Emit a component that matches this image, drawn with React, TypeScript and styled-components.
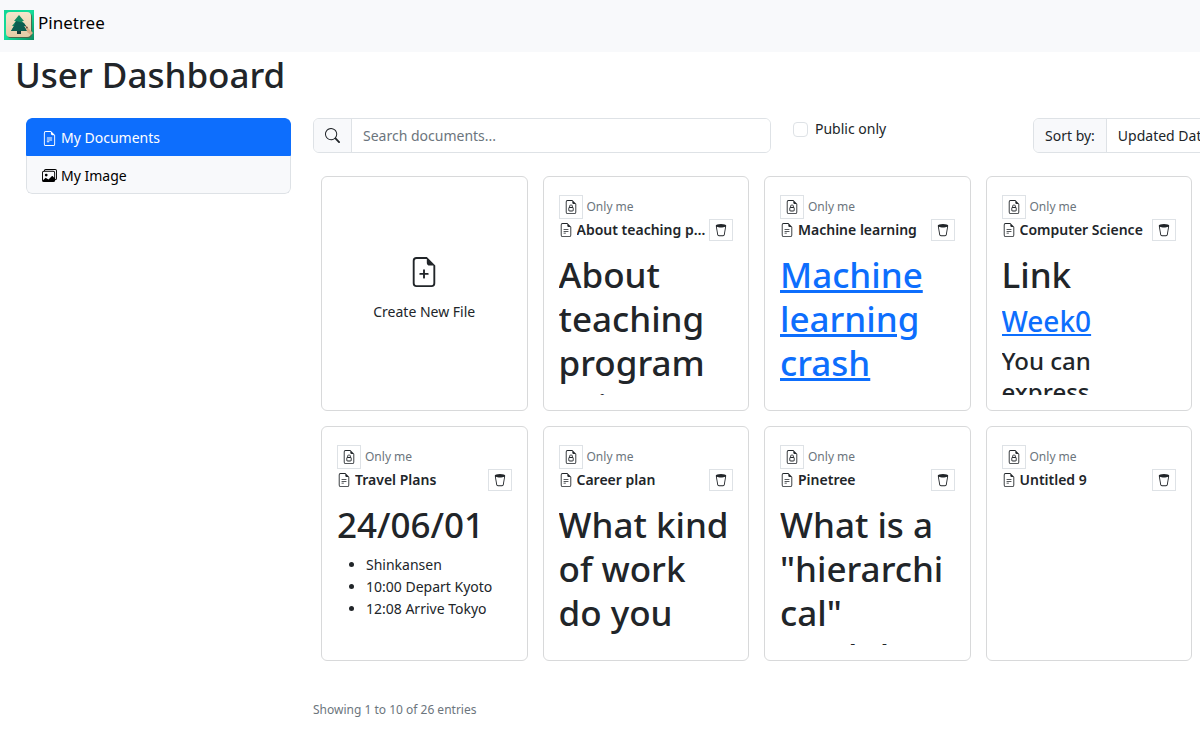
import React from "react";
import styled, { createGlobalStyle } from "styled-components";
import {
  BsFileEarmarkLock,
  BsFileEarmarkPlus,
  BsFileEarmarkText,
  BsImages,
  BsSearch,
  BsTrash2,
} from "react-icons/bs";

const GlobalStyle = createGlobalStyle`
  *, *::before, *::after { box-sizing: border-box; }
  body {
    margin: 0;
    background: #fff;
    color: #212529;
    font-family: "Noto Sans", "Open Sans", sans-serif;
    font-size: 14px;
    line-height: 22px;
  }
  button, input, select { font: inherit; color: inherit; }
  h1, h2, h3, p, ul { margin: 0; }
`;

const Page = styled.div`
  min-height: 100vh;
  overflow-x: hidden;
`;

const Navbar = styled.nav`
  display: flex;
  align-items: flex-start;
  padding: 10px 4px 12px;
  background: #f8f9fb;
`;

const Brand = styled.a`
  display: flex;
  gap: 4px;
  color: #000;
  font-size: 17px;
  line-height: 26px;
  text-decoration: none;
`;

const PageTitle = styled.h1`
  padding: 1px 15px 0;
  font-size: 35px;
  font-weight: 500;
  line-height: 44px;
`;

const Columns = styled.div`
  display: grid;
  grid-template-columns: minmax(0, 265fr) minmax(0, 887fr);
  gap: 22px;
  padding: 21px 0 0 26px;
`;

const Sidebar = styled.aside`
  align-self: start;
  overflow: hidden;
  border-radius: 6px;
`;

const SideLink = styled.a<{ $active?: boolean }>`
  display: flex;
  align-items: center;
  gap: 4px;
  height: 38px;
  padding: 2px 15px 0;
  border: 1px solid ${(p) => (p.$active ? "#0d6efd" : "#dee2e6")};
  border-top-width: ${(p) => (p.$active ? "1px" : "0")};
  border-radius: ${(p) => (p.$active ? "6px 6px 0 0" : "0 0 6px 6px")};
  background: ${(p) => (p.$active ? "#0d6efd" : "#f8f9fb")};
  color: ${(p) => (p.$active ? "#fff" : "#000")};
  text-decoration: none;
  svg { width: 15px; height: 15px; }
`;

const Toolbar = styled.form`
  display: grid;
  grid-template-columns: minmax(0, 458fr) minmax(0, 218fr) minmax(0, 167fr);
  gap: 22px;
  align-items: start;
`;

const InputGroup = styled.div`
  display: flex;
  height: 35px;
  border: 1px solid #dee2e6;
  border-radius: 6px;
  overflow: hidden;
`;

const SortGroup = styled(InputGroup)`
  width: 230px;
`;

const Addon = styled.label`
  display: flex;
  flex: none;
  align-items: center;
  padding: 0 11px;
  border-right: 1px solid #dee2e6;
  background: #f8f9fb;
  svg { width: 15px; height: 15px; }
`;

const SearchInput = styled.input`
  flex: 1;
  min-width: 0;
  padding: 0 11px;
  border: 0;
  outline: 0;
  &::placeholder { color: #6c757d; opacity: 1; }
`;

const SortSelect = styled.select`
  flex: 1;
  min-width: 0;
  padding: 0 11px;
  border: 0;
  appearance: none;
  background: #fff;
`;

const Check = styled.label`
  display: flex;
  align-items: center;
  gap: 7px;
`;

const Checkbox = styled.input`
  width: 15px;
  height: 15px;
  margin: 0;
  appearance: none;
  border: 1px solid #dee2e6;
  border-radius: 4px;
  &:checked { background: #0d6efd; }
`;

const CardGrid = styled.div`
  display: grid;
  grid-template-columns: repeat(4, minmax(0, 1fr));
  gap: 15px;
  padding: 23px 8px 0;
`;

const Card = styled.article`
  padding: 18px 15px 15px;
  border: 1px solid #d8d9da;
  border-radius: 6px;
`;

const CreateCard = styled.button`
  display: flex;
  flex-direction: column;
  align-items: center;
  justify-content: center;
  gap: 14px;
  padding: 0 0 8px;
  border: 1px solid #d8d9da;
  border-radius: 6px;
  background: #fff;
  svg { width: 30px; height: 30px; }
`;

const Visibility = styled.div`
  display: flex;
  align-items: center;
  gap: 4px;
  color: #6c757d;
  font-size: 12px;
`;

const IconButton = styled.button<{ $height: number }>`
  display: flex;
  flex: none;
  align-items: center;
  justify-content: center;
  width: 24px;
  height: ${(p) => p.$height}px;
  padding: 0;
  border: 1px solid #dee2e6;
  background: #fff;
  color: #212529;
  svg { width: 14px; height: 14px; }
`;

const TitleRow = styled.div`
  display: flex;
  align-items: center;
  height: 22px;
  > svg { flex: none; width: 14px; height: 14px; }
`;

const Title = styled.h2`
  flex: 1;
  min-width: 0;
  margin-left: 4px;
  overflow: hidden;
  font-size: 14px;
  font-weight: 600;
  line-height: 22px;
  text-overflow: ellipsis;
  white-space: nowrap;
`;

const Preview = styled.div`
  height: 142px;
  margin-top: 12px;
  overflow: hidden;
  overflow-wrap: break-word;
  a { color: #0d6efd; }
`;

const Heading1 = styled.h1`
  font-size: 35px;
  font-weight: 500;
  line-height: 44px;
`;

const Heading2 = styled.h2`
  padding: 7px 0 6px;
  font-size: 28px;
  font-weight: 500;
  line-height: 35px;
`;

const Heading3 = styled.h3`
  font-size: 24px;
  font-weight: 500;
  line-height: 31px;
`;

const List = styled.ul`
  padding: 7px 0 0 29px;
`;

const Summary = styled.p`
  padding: 38px 0 20px;
  color: #6c757d;
  font-size: 12px;
`;

const Logo = () => (
  <svg width="30" height="30" viewBox="0 0 30 30" aria-hidden="true">
    <defs>
      <linearGradient id="frame" x1="0" y1="0" x2="1" y2="1">
        <stop offset="0" stopColor="#12d795" />
        <stop offset="0.5" stopColor="#14dc9b" />
        <stop offset="1" stopColor="#0b8a60" />
      </linearGradient>
      <linearGradient id="tile" x1="0" y1="0" x2="0" y2="1">
        <stop offset="0" stopColor="#f5e6cb" />
        <stop offset="1" stopColor="#e6cba6" />
      </linearGradient>
    </defs>
    <rect width="30" height="30" fill="url(#frame)" />
    <rect x="3" y="3" width="25" height="25" rx="4" fill="#4b6a4c" />
    <rect x="2" y="2" width="25" height="25" rx="4" fill="url(#tile)" />
    <path d="M13 19h4v5h-4z" fill="#173c38" />
    <path d="M15 5l5 6h-2l4 5h-2l3 5H7l3-5H8l4-5h-2z" fill="#128a62" />
    <path d="M12 11l8 2 2 3h-2l3 5H7l3-5z" fill="#0c5d50" />
    <path d="M22 16l3 3 4 4-2 2-4-3z" fill="#dcae86" />
    <path d="M21 16l3 1-1 2z" fill="#66463c" />
  </svg>
);

type Doc = { title: string; body?: React.ReactNode };

const documents: Doc[] = [
  { title: "About teaching program", body: <Heading1>About teaching program using</Heading1> },
  {
    title: "Machine learning",
    body: (
      <Heading1>
        <a href="#crash-course">Machine learning crash</a>
      </Heading1>
    ),
  },
  {
    title: "Computer Science",
    body: (
      <>
        <Heading1>Link</Heading1>
        <Heading2>
          <a href="#week0">Week0</a>
        </Heading2>
        <Heading3>You can express</Heading3>
      </>
    ),
  },
  {
    title: "Travel Plans",
    body: (
      <>
        <Heading1>24/06/01</Heading1>
        <List>
          <li>Shinkansen</li>
          <li>10:00 Depart Kyoto</li>
          <li>12:08 Arrive Tokyo</li>
        </List>
      </>
    ),
  },
  { title: "Career plan", body: <Heading1>What kind of work do you</Heading1> },
  { title: "Pinetree", body: <Heading1>What is a "hierarchical" markdown</Heading1> },
  { title: "Untitled 9" },
];

const DocumentCard = ({ title, body }: Doc) => (
  <Card>
    <Visibility>
      <IconButton type="button" $height={24} aria-label="Change visibility">
        <BsFileEarmarkLock />
      </IconButton>
      Only me
    </Visibility>
    <TitleRow>
      <BsFileEarmarkText />
      <Title>{title}</Title>
      <IconButton type="button" $height={22} aria-label={`Delete ${title}`}>
        <BsTrash2 />
      </IconButton>
    </TitleRow>
    <Preview>{body}</Preview>
  </Card>
);

export default function App() {
  return (
    <Page>
      <GlobalStyle />
      <Navbar>
        <Brand href="#home">
          <Logo />
          Pinetree
        </Brand>
      </Navbar>
      <PageTitle>User Dashboard</PageTitle>
      <Columns>
        <Sidebar>
          <SideLink href="#documents" $active>
            <BsFileEarmarkText />
            My Documents
          </SideLink>
          <SideLink href="#images">
            <BsImages />
            My Image
          </SideLink>
        </Sidebar>
        <main>
          <Toolbar>
            <InputGroup>
              <Addon htmlFor="search" aria-label="Search">
                <BsSearch />
              </Addon>
              <SearchInput id="search" type="text" placeholder="Search documents..." />
            </InputGroup>
            <Check>
              <Checkbox type="checkbox" />
              Public only
            </Check>
            <SortGroup>
              <Addon htmlFor="sort">Sort by:</Addon>
              <SortSelect id="sort">
                <option>Updated Date</option>
              </SortSelect>
            </SortGroup>
          </Toolbar>
          <CardGrid>
            <CreateCard type="button">
              <BsFileEarmarkPlus />
              Create New File
            </CreateCard>
            {documents.map((doc) => (
              <DocumentCard key={doc.title} {...doc} />
            ))}
          </CardGrid>
          <Summary>Showing 1 to 10 of 26 entries</Summary>
        </main>
      </Columns>
    </Page>
  );
}
